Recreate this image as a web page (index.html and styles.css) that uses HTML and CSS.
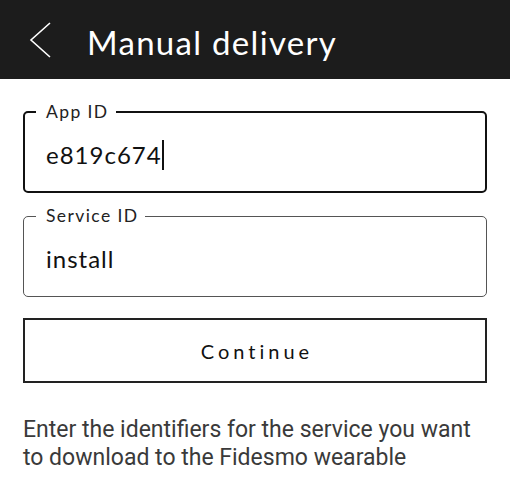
FILE: index.html
```html
<!DOCTYPE html>
<html lang="en">
<head>
<meta charset="utf-8">
<title>Manual delivery</title>
<link rel="stylesheet" href="styles.css">
</head>
<body>
<header class="topbar">
  <svg class="back" width="24" height="36" viewBox="0 0 24 36" aria-hidden="true">
    <path d="M21 1 L2 18 L21 35" fill="none" stroke="#fff" stroke-width="1.6"/>
  </svg>
  <h1 class="title">Manual delivery</h1>
</header>
<main class="content">
  <fieldset class="field field-active">
    <legend class="field-label">App ID</legend>
    <div class="field-value">e819c674<span class="caret"></span></div>
  </fieldset>
  <fieldset class="field">
    <legend class="field-label">Service ID</legend>
    <div class="field-value">install</div>
  </fieldset>
  <button class="btn" type="button">Continue</button>
  <p class="hint">Enter the identifiers for the service you want to download to the Fidesmo wearable</p>
</main>
</body>
</html>
```
FILE: styles.css
```css
html, body {
  margin: 0;
  padding: 0;
  background: #fff;
}
body {
  width: 510px;
  font-family: Lato, "Noto Sans", sans-serif;
  color: #111;
}
.topbar {
  height: 79px;
  background: #1c1c1c;
  display: flex;
  align-items: center;
  padding-left: 29px;
  box-sizing: border-box;
}
.back {
  display: block;
  margin-top: 1px;
}
.title {
  margin: 5px 0 0 34px;
  color: #fff;
  font-family: Lato, sans-serif;
  font-weight: 400;
  font-size: 33px;
  letter-spacing: 1.3px;
}
.content {
  padding: 0 23px;
  display: flex;
  flex-direction: column;
}
.field {
  margin: 0;
  min-width: 0;
  border: 1px solid #555;
  border-radius: 5px;
  padding: 0 0 0 12px;
  height: 91px;
  box-sizing: border-box;
}
.field-active {
  border: 2px solid #111;
  padding-left: 11px;
  margin-top: 23px;
}
.field + .field {
  margin-top: 13px;
}
.field-label {
  padding: 0 7px 0 10px;
  font-size: 17.5px;
  line-height: 20px;
  letter-spacing: 1.4px;
  color: #222;
}
.field-value {
  font-size: 24px;
  line-height: 30px;
  margin-top: 18px;
  padding-left: 10px;
  letter-spacing: 1px;
  display: flex;
  align-items: center;
}
.caret {
  display: inline-block;
  width: 2px;
  height: 30px;
  background: #111;
  margin-left: 0;
}
.btn {
  margin-top: 21px;
  height: 65px;
  border: 2px solid #222;
  border-radius: 0;
  background: #fff;
  font-family: Lato, sans-serif;
  font-size: 20px;
  letter-spacing: 4px;
  color: #111;
  padding: 0 0 0 4px;
}
.hint {
  margin: 33px 0 0;
  font-family: Roboto, sans-serif;
  font-size: 23px;
  line-height: 28px;
  color: #3a3a3a;
}
```
